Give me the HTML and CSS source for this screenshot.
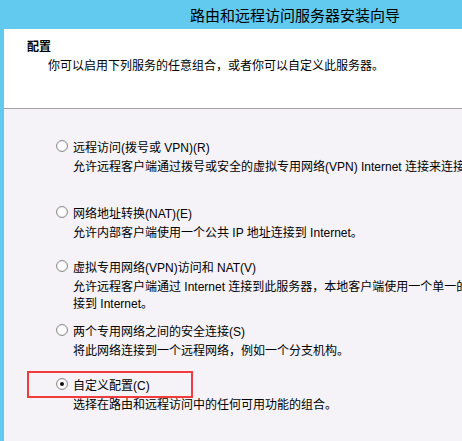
FILE: index.html
```html
<!DOCTYPE html>
<html lang="zh-CN">
<head>
<meta charset="utf-8">
<title>路由和远程访问服务器安装向导</title>
<link rel="stylesheet" href="styles.css">
</head>
<body>
<div class="window">
  <div class="titlebar">路由和远程访问服务器安装向导</div>
  <div class="frame">
    <div class="header">
      <div class="heading">配置</div>
      <div class="subheading">你可以启用下列服务的任意组合，或者你可以自定义此服务器。</div>
    </div>
    <div class="content">
      <div class="option gap-lg">
        <div class="label"><span class="radio"></span><span>远程访问(拨号或 VPN)(R)</span></div>
        <div class="desc">允许远程客户端通过拨号或安全的虚拟专用网络(VPN) Internet 连接来连接到此服务器。</div>
      </div>
      <div class="option">
        <div class="label"><span class="radio"></span><span>网络地址转换(NAT)(E)</span></div>
        <div class="desc">允许内部客户端使用一个公共 IP 地址连接到 Internet。</div>
      </div>
      <div class="option gap-sm">
        <div class="label"><span class="radio"></span><span>虚拟专用网络(VPN)访问和 NAT(V)</span></div>
        <div class="desc">允许远程客户端通过 Internet 连接到此服务器，本地客户端使用一个单一的公共 IP 地址连</div>
        <div class="desc cont">接到 Internet。</div>
      </div>
      <div class="option">
        <div class="label"><span class="radio"></span><span>两个专用网络之间的安全连接(S)</span></div>
        <div class="desc">将此网络连接到一个远程网络，例如一个分支机构。</div>
      </div>
      <div class="option selected-option">
        <div class="highlight"></div>
        <div class="label"><span class="radio checked"></span><span>自定义配置(C)</span></div>
        <div class="desc">选择在路由和远程访问中的任何可用功能的组合。</div>
      </div>
    </div>
  </div>
</div>
</body>
</html>
```

FILE: styles.css
```css
html, body {
  margin: 0;
  padding: 0;
}
body {
  width: 462px;
  height: 441px;
  overflow: hidden;
  font-family: "Liberation Sans", "Noto Sans CJK SC", sans-serif;
  font-size: 12px;
  color: #000;
  background: #62c9ef;
}
.window {
  display: flex;
  flex-direction: column;
  height: 441px;
}
.titlebar {
  height: 29px;
  line-height: 29px;
  padding-left: 190px;
  font-size: 15px;
  color: #000;
  white-space: nowrap;
  font-family: "Noto Sans CJK SC", sans-serif;
}
.frame {
  flex: 1;
  margin-left: 4px;
  display: flex;
  flex-direction: column;
  background: #f5f3f7;
  overflow: hidden;
}
.header {
  height: 78px;
  background: #fff;
  border-bottom: 1px solid #a0a0a0;
  box-sizing: border-box;
  height: 80px;
  padding-top: 10px;
  padding-left: 23px;
}
.heading {
  font-weight: bold;
  line-height: 17px;
}
.subheading {
  margin-top: 2px;
  padding-left: 21px;
  line-height: 17px;
  white-space: nowrap;
}
.content {
  padding-top: 28px;
  padding-left: 52px;
}
.option {
  position: relative;
  margin-bottom: 15px;
}
.option.gap-lg {
  margin-bottom: 27px;
}
.option.gap-sm {
  margin-bottom: 8px;
}
.label {
  display: flex;
  align-items: center;
  gap: 5px;
  height: 18px;
  white-space: nowrap;
}
.radio {
  width: 12px;
  height: 12px;
  box-sizing: border-box;
  border-radius: 50%;
  border: 1px solid #8f8f8f;
  background: radial-gradient(circle at 50% 50%, #ffffff 0 45%, #e6e6e6 75%);
  display: flex;
  align-items: center;
  justify-content: center;
  flex: none;
}
.radio.checked::after {
  content: "";
  width: 4px;
  height: 4px;
  border-radius: 50%;
  background: #111;
}
.desc {
  margin-top: 4px;
  padding-left: 17px;
  line-height: 17px;
  white-space: nowrap;
  overflow: hidden;
}
.desc.cont {
  margin-top: 0;
}
.highlight {
  position: absolute;
  left: -29px;
  top: -4px;
  width: 166px;
  height: 27px;
  box-sizing: border-box;
  border: 2px solid #f03c3c;
  pointer-events: none;
}
```
